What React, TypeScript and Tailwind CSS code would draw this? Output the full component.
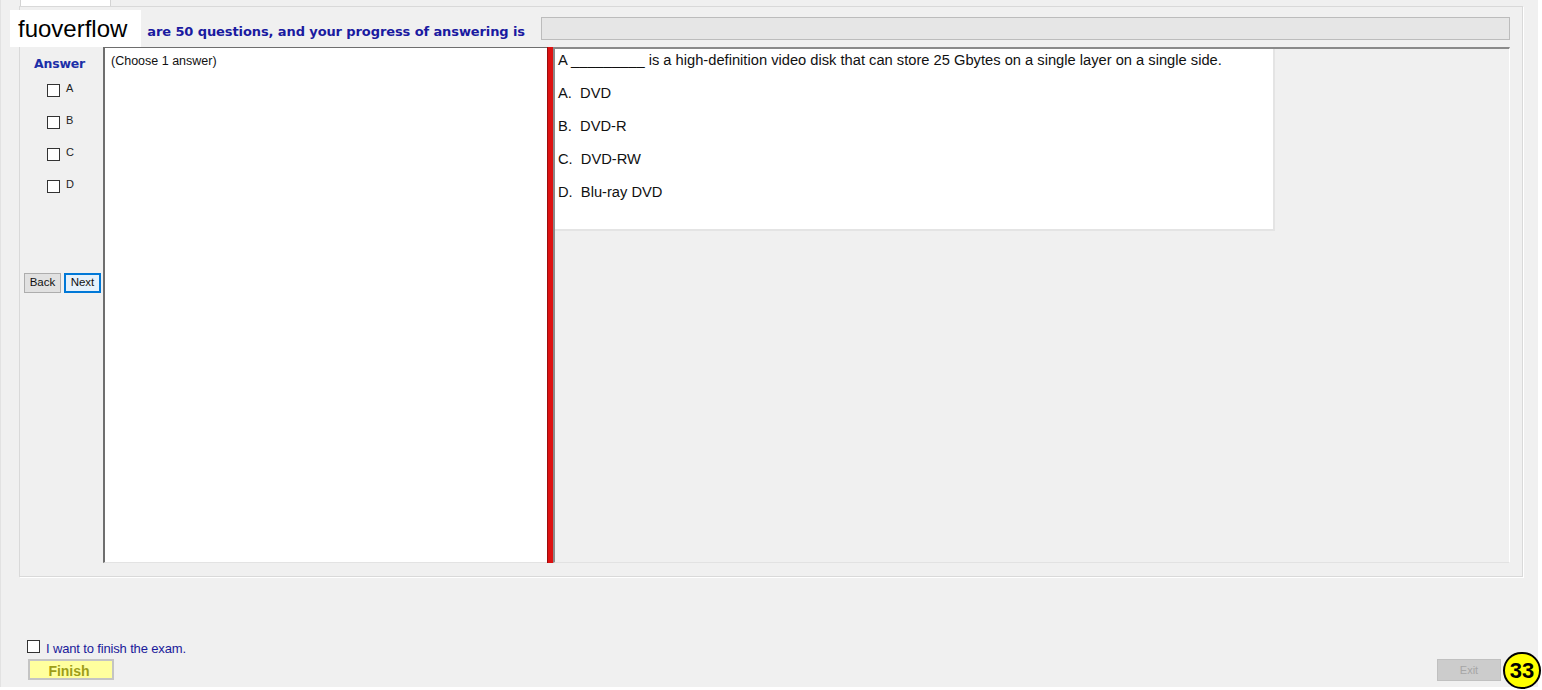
import React from "react";

const options = ["A", "B", "C", "D"];
const answers = ["A.  DVD", "B.  DVD-R", "C.  DVD-RW", "D.  Blu-ray DVD"];

function Box({ className = "" }: { className?: string }) {
  return <span className={`inline-block bg-white border border-[#333333] ${className}`} />;
}

export default function App() {
  return (
    <div className="relative w-[1542px] h-[690px] bg-white overflow-hidden font-['Liberation_Sans',Arial,sans-serif]">
      <div className="w-[1538px] h-[687px] bg-[#f0f0f0] flex flex-col border-l border-[#e2e2e2]">
        {/* tab strip */}
        <div className="h-[6px] flex">
          <div className="ml-[19px] w-[91px] h-[6px] bg-white border-x border-[#d4d4d4]" />
        </div>

        {/* tab page / group */}
        <div className="ml-[18px] w-[1504px] h-[571px] border border-[#d9d9d9] shadow-[1px_1px_0_#ffffff] flex flex-col pl-[4px] pr-[12px] pt-[10px]">
          {/* header row */}
          <div className="h-[23px] flex items-center">
            <div className="w-[501px] text-right text-[13px] font-bold text-[#1a1aa0] leading-none pt-[6px] whitespace-nowrap font-['DejaVu_Sans',Verdana,sans-serif] tracking-[-0.1px]">
              are 50 questions, and your progress of answering is
            </div>
            <div className="ml-[16px] flex-1 h-[23px] bg-[#e6e6e6] border border-[#bcbcbc]" />
          </div>

          {/* content */}
          <div className="mt-[7px] h-[516px] flex">
            {/* answer column */}
            <div className="w-[79px] flex flex-col">
              <div className="pl-[10px] pt-[9px] text-[12.5px] font-bold text-[#1c2fa8] leading-[16px] font-['DejaVu_Sans',Verdana,sans-serif] tracking-[-0.2px]">Answer</div>
              <div className="flex flex-col gap-[19px] mt-[12px] pl-[23px]">
                {options.map((o) => (
                  <div key={o} className="flex items-center h-[13px]">
                    <Box className="w-[13px] h-[13px]" />
                    <span className="ml-[6px] text-[11px] text-[#222] leading-none -mt-[4px]">{o}</span>
                  </div>
                ))}
              </div>
              <div className="mt-[80px] flex gap-[3px]">
                <button className="w-[37px] h-[20px] bg-[#e1e1e1] border border-[#adadad] text-[11.5px] text-[#111] leading-none">
                  Back
                </button>
                <button className="w-[37px] h-[20px] bg-[#e5f1fb] border-2 border-[#0078d7] text-[11.5px] text-[#111] leading-none">
                  Next
                </button>
              </div>
            </div>

            {/* text panel */}
            <div className="w-[444px] bg-white border-l-2 border-t border-[#6e6e6e] border-b border-b-[#e3e3e3] pl-[6px] pt-[7px]">
              <div className="text-[12.5px] text-[#111] leading-none">(Choose 1 answer)</div>
            </div>

            {/* splitter */}
            <div className="w-[6px] bg-[#dd1111] border-l border-[#9a0c0c]" />

            {/* question panel */}
            <div className="flex-1 bg-[#f0f0f0] border-t-2 border-[#8a8a8a] border-l-2 border-l-[#8a8a8a] border-r border-r-[#ffffff] border-b border-b-[#e2e2e2]">
              <div className="w-[720px] h-[182px] bg-white border-r-2 border-b-2 border-[#e4e4e4] pl-[3px] pt-[1px] text-[14.7px] text-[#111]">
                <div className="leading-[20px]">A _________ is a high-definition video disk that can store 25 Gbytes on a single layer on a single side.</div>
                {answers.map((a) => (
                  <div key={a} className="mt-[13px] leading-[20px] whitespace-pre">{a}</div>
                ))}
              </div>
            </div>
          </div>
        </div>

        {/* bottom */}
        <div className="flex-1 flex items-end justify-between">
          <div className="ml-[26px] mb-[7px] flex flex-col">
            <div className="flex items-center h-[14px]">
              <Box className="w-[13px] h-[13px]" />
              <span className="ml-[6px] text-[13px] text-[#1a1a9a] leading-none mt-[5px] tracking-[-0.15px]">I want to finish the exam.</span>
            </div>
            <button className="mt-[6px] ml-[1px] w-[86px] h-[21px] bg-[#ffff9e] border-2 border-[#c4c4c4] text-[14px] font-bold text-[#9d9d18] leading-none pt-[2px] pr-[4px]">
              Finish
            </button>
          </div>
          <button className="mr-[37px] mb-[6px] w-[64px] h-[22px] bg-[#cccccc] border border-[#c0c0c0] text-[11px] text-[#a6a6a6] leading-none">
            Exit
          </button>
        </div>
      </div>

      {/* watermark badges */}
      <div className="absolute left-[10px] top-[10px] w-[131px] h-[37px] bg-white flex items-center pl-[8px] text-[24px] text-black leading-none">
        fuoverflow
      </div>
      <div className="absolute left-[1503px] top-[652px] w-[38px] h-[37px] rounded-full bg-[#ffff00] border-2 border-black flex items-center justify-center text-[22px] font-bold text-black leading-none">
        33
      </div>
    </div>
  );
}
